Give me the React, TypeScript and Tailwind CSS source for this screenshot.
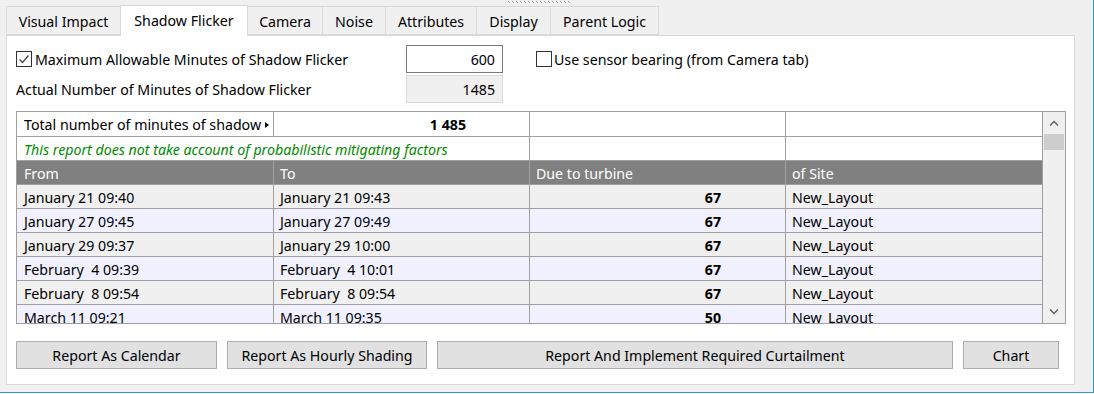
import React from "react";

const rows = [
  ["January 21 09:40", "January 21 09:43", "67", "New_Layout"],
  ["January 27 09:45", "January 27 09:49", "67", "New_Layout"],
  ["January 29 09:37", "January 29 10:00", "67", "New_Layout"],
  ["February  4 09:39", "February  4 10:01", "67", "New_Layout"],
  ["February  8 09:54", "February  8 09:54", "67", "New_Layout"],
  ["March 11 09:21", "March 11 09:35", "50", "New_Layout"],
];

const tabs = [
  { label: "Visual Impact", w: "w-[115px]" },
  { label: "Shadow Flicker", w: "w-[128px]", active: true },
  { label: "Camera", w: "w-[76px]" },
  { label: "Noise", w: "w-[64px]" },
  { label: "Attributes", w: "w-[92px]" },
  { label: "Display", w: "w-[75px]" },
  { label: "Parent Logic", w: "w-[109px]" },
];

function CheckBox({ checked }: { checked?: boolean }) {
  return (
    <div className="w-[16px] h-[16px] border border-[#333333] bg-white flex items-center justify-center shrink-0">
      {checked && (
        <svg width="12" height="12" viewBox="0 0 12 12">
          <path d="M1.5 6.5 L4.5 9.5 L10.5 2.5" fill="none" stroke="#444" strokeWidth="1.2" />
        </svg>
      )}
    </div>
  );
}

function Button({ label, w }: { label: string; w: string }) {
  return (
    <div className={`${w} h-[28px] bg-[#e1e1e1] border border-[#adadad] flex items-center justify-center pt-[2px] shrink-0`}>
      {label}
    </div>
  );
}

export default function App() {
  return (
    <div className="w-[1094px] h-[393px] bg-[#f0f0f0] border-r border-b border-[#2b9bd8] font-['Noto_Sans',sans-serif] text-[14.2px] text-black overflow-hidden">
      {/* splitter grip */}
      <div className="h-[5px] pl-[508px] pt-[1px] flex items-start">
        <svg width="64" height="3" viewBox="0 0 64 3">
          {Array.from({ length: 16 }).map((_, i) => (
            <g key={i} fill="#a0a0a0">
              <rect x={i * 4} y={0} width={1} height={1} />
              <rect x={i * 4 + 1} y={1} width={1} height={1} />
            </g>
          ))}
        </svg>
      </div>

      {/* tabs */}
      <div className="flex items-end pl-[6px] h-[30px] relative z-10">
        {tabs.map((t, i) =>
          t.active ? (
            <div
              key={t.label}
              className={`${t.w} h-[31px] -mb-[1px] bg-white border border-b-0 border-[#d9d9d9] -ml-[1px] flex items-center justify-center`}
            >
              {t.label}
            </div>
          ) : (
            <div
              key={t.label}
              className={`${t.w} h-[29px] bg-[#f0f0f0] border border-[#d9d9d9] ${i > 0 ? "-ml-[1px]" : ""} flex items-center justify-center pt-[2px]`}
            >
              {t.label}
            </div>
          )
        )}
      </div>

      {/* panel */}
      <div className="ml-[6px] w-[1069px] h-[350px] bg-white border border-[#d9d9d9] pl-[9px] pt-[9px]">
        <div className="flex items-center h-[28px]">
          <div className="w-[390px] flex items-center">
            <CheckBox checked />
            <span className="ml-[3px] pt-[2px]">Maximum Allowable Minutes of Shadow Flicker</span>
          </div>
          <div className="w-[97px] h-[28px] border border-[#7a7a7a] bg-white flex items-center justify-end pr-[7px] pt-[2px]">600</div>
          <div className="ml-[33px] flex items-center">
            <CheckBox />
            <span className="ml-[2px] pt-[2px]">Use sensor bearing (from Camera tab)</span>
          </div>
        </div>
        <div className="flex items-center h-[28px] mt-[2px]">
          <div className="w-[390px] pt-[2px]">Actual Number of Minutes of Shadow Flicker</div>
          <div className="w-[97px] h-[28px] border border-[#d9d9d9] bg-[#f0f0f0] flex items-center justify-end pr-[7px] pt-[2px]">1485</div>
        </div>

        {/* grid */}
        <div className="mt-[8px] w-[1050px] h-[213px] border border-[#a0a0a0] flex overflow-hidden">
          <div className="w-[1026px] flex flex-col">
            <div className="flex h-[25px] shrink-0 border-b border-[#a0a0a0] bg-white">
              <div className="w-[257px] border-r border-[#a0a0a0] pl-[7px] pr-[4px] pt-[2px] flex items-center justify-between">
                <span>Total number of minutes of shadow</span>
                <svg width="4" height="6" viewBox="0 0 4 6">
                  <path d="M0 0 L4 3 L0 6 Z" fill="#000" />
                </svg>
              </div>
              <div className="w-[256px] border-r border-[#a0a0a0] pr-[63px] pt-[2px] flex items-center justify-end font-bold">1 485</div>
              <div className="w-[256px] border-r border-[#a0a0a0]" />
              <div className="w-[257px] border-r border-[#a0a0a0]" />
            </div>
            <div className="flex h-[24px] shrink-0 border-b border-[#a0a0a0] bg-white">
              <div className="w-[513px] border-r border-[#a0a0a0] pl-[7px] pt-[2px] flex items-center italic text-[#008a00]">
                This report does not take account of probabilistic mitigating factors
              </div>
              <div className="w-[256px] border-r border-[#a0a0a0]" />
              <div className="w-[257px] border-r border-[#a0a0a0]" />
            </div>
            <div className="flex h-[24px] shrink-0 border-b border-[#a0a0a0] bg-[#808080] text-white">
              <div className="w-[257px] border-r border-[#a0a0a0] pl-[7px] pt-[2px] flex items-center">From</div>
              <div className="w-[256px] border-r border-[#a0a0a0] pl-[6px] pt-[2px] flex items-center">To</div>
              <div className="w-[256px] border-r border-[#a0a0a0] pl-[6px] pt-[2px] flex items-center">Due to turbine</div>
              <div className="w-[257px] border-r border-[#a0a0a0] pl-[6px] pt-[2px] flex items-center">of Site</div>
            </div>
            {rows.map((r, i) => (
              <div
                key={i}
                className={`flex h-[24px] shrink-0 border-b border-[#a0a0a0] ${i % 2 === 0 ? "bg-[#f0f0f0]" : "bg-[#f0f0ff]"}`}
              >
                <div className="w-[257px] border-r border-[#a0a0a0] pl-[7px] pt-[2px] flex items-center whitespace-pre">{r[0]}</div>
                <div className="w-[256px] border-r border-[#a0a0a0] pl-[6px] pt-[2px] flex items-center whitespace-pre">{r[1]}</div>
                <div className="w-[256px] border-r border-[#a0a0a0] pr-[64px] pt-[2px] flex items-center justify-end font-bold">{r[2]}</div>
                <div className="w-[257px] border-r border-[#a0a0a0] pl-[6px] pt-[2px] flex items-center">{r[3]}</div>
              </div>
            ))}
          </div>
          {/* scrollbar */}
          <div className="w-[22px] bg-[#f0f0f0] flex flex-col">
            <div className="h-[22px] flex items-center justify-center">
              <svg width="10" height="6" viewBox="0 0 10 6">
                <path d="M1 5.5 L5 1.5 L9 5.5" fill="none" stroke="#606060" strokeWidth="1.5" />
              </svg>
            </div>
            <div className="mx-[1px] h-[16px] bg-[#cdcdcd]" />
            <div className="flex-1" />
            <div className="h-[22px] flex items-center justify-center">
              <svg width="10" height="6" viewBox="0 0 10 6">
                <path d="M1 0.5 L5 4.5 L9 0.5" fill="none" stroke="#606060" strokeWidth="1.5" />
              </svg>
            </div>
          </div>
        </div>

        {/* buttons */}
        <div className="mt-[17px] flex">
          <Button label="Report As Calendar" w="w-[201px]" />
          <div className="ml-[10px]">
            <Button label="Report As Hourly Shading" w="w-[200px]" />
          </div>
          <div className="ml-[10px]">
            <Button label="Report And Implement Required Curtailment" w="w-[516px]" />
          </div>
          <div className="ml-[10px]">
            <Button label="Chart" w="w-[96px]" />
          </div>
        </div>
      </div>
    </div>
  );
}
